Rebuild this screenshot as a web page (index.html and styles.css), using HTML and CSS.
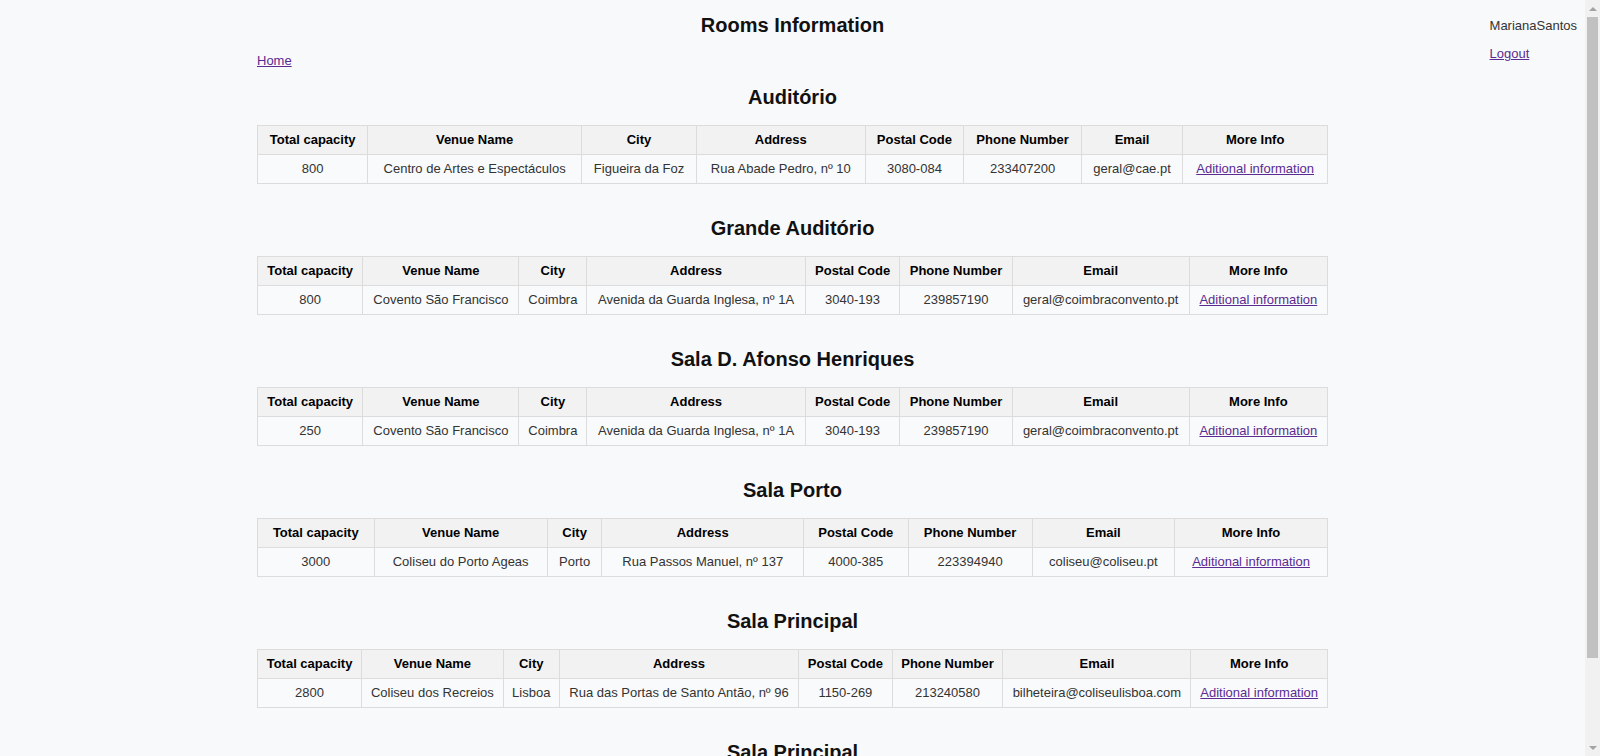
FILE: index.html
```html
<!DOCTYPE html>
<html lang="en">
<head>
<meta charset="utf-8">
<title>Rooms Information</title>
<link rel="stylesheet" href="styles.css">
</head>
<body>
<div class="page">
  <main class="main">
    <h1 class="title">Rooms Information</h1>
    <nav class="nav"><a class="link" href="#">Home</a></nav>

    <section class="room">
      <h2 class="room-name">Auditório</h2>
      <table class="info">
        <thead><tr><th>Total capacity</th><th>Venue Name</th><th>City</th><th>Address</th><th>Postal Code</th><th>Phone Number</th><th>Email</th><th>More Info</th></tr></thead>
        <tbody><tr><td>800</td><td>Centro de Artes e Espectáculos</td><td>Figueira da Foz</td><td>Rua Abade Pedro, nº 10</td><td>3080-084</td><td>233407200</td><td>geral@cae.pt</td><td><a class="link" href="#">Aditional information</a></td></tr></tbody>
      </table>
    </section>

    <section class="room">
      <h2 class="room-name">Grande Auditório</h2>
      <table class="info">
        <thead><tr><th>Total capacity</th><th>Venue Name</th><th>City</th><th>Address</th><th>Postal Code</th><th>Phone Number</th><th>Email</th><th>More Info</th></tr></thead>
        <tbody><tr><td>800</td><td>Covento São Francisco</td><td>Coimbra</td><td>Avenida da Guarda Inglesa, nº 1A</td><td>3040-193</td><td>239857190</td><td>geral@coimbraconvento.pt</td><td><a class="link" href="#">Aditional information</a></td></tr></tbody>
      </table>
    </section>

    <section class="room">
      <h2 class="room-name">Sala D. Afonso Henriques</h2>
      <table class="info">
        <thead><tr><th>Total capacity</th><th>Venue Name</th><th>City</th><th>Address</th><th>Postal Code</th><th>Phone Number</th><th>Email</th><th>More Info</th></tr></thead>
        <tbody><tr><td>250</td><td>Covento São Francisco</td><td>Coimbra</td><td>Avenida da Guarda Inglesa, nº 1A</td><td>3040-193</td><td>239857190</td><td>geral@coimbraconvento.pt</td><td><a class="link" href="#">Aditional information</a></td></tr></tbody>
      </table>
    </section>

    <section class="room">
      <h2 class="room-name">Sala Porto</h2>
      <table class="info">
        <thead><tr><th>Total capacity</th><th>Venue Name</th><th>City</th><th>Address</th><th>Postal Code</th><th>Phone Number</th><th>Email</th><th>More Info</th></tr></thead>
        <tbody><tr><td>3000</td><td>Coliseu do Porto Ageas</td><td>Porto</td><td>Rua Passos Manuel, nº 137</td><td>4000-385</td><td>223394940</td><td>coliseu@coliseu.pt</td><td><a class="link" href="#">Aditional information</a></td></tr></tbody>
      </table>
    </section>

    <section class="room">
      <h2 class="room-name">Sala Principal</h2>
      <table class="info">
        <thead><tr><th>Total capacity</th><th>Venue Name</th><th>City</th><th>Address</th><th>Postal Code</th><th>Phone Number</th><th>Email</th><th>More Info</th></tr></thead>
        <tbody><tr><td>2800</td><td>Coliseu dos Recreios</td><td>Lisboa</td><td>Rua das Portas de Santo Antão, nº 96</td><td>1150-269</td><td>213240580</td><td>bilheteira@coliseulisboa.com</td><td><a class="link" href="#">Aditional information</a></td></tr></tbody>
      </table>
    </section>

    <section class="room">
      <h2 class="room-name">Sala Principal</h2>
      <table class="info">
        <thead><tr><th>Total capacity</th><th>Venue Name</th><th>City</th><th>Address</th><th>Postal Code</th><th>Phone Number</th><th>Email</th><th>More Info</th></tr></thead>
        <tbody><tr><td>1238</td><td>Casa da Música</td><td>Porto</td><td>Avenida da Boavista, nº 604-610</td><td>4149-071</td><td>220120220</td><td>info@casadamusica.com</td><td><a class="link" href="#">Aditional information</a></td></tr></tbody>
      </table>
    </section>
  </main>

  <aside class="user">
    <div class="user-name">MarianaSantos</div>
    <a class="link" href="#">Logout</a>
  </aside>
</div>

<div class="scrollbar" aria-hidden="true">
  <div class="scroll-btn scroll-up"></div>
  <div class="scroll-track"><div class="scroll-thumb"></div></div>
  <div class="scroll-btn scroll-down"></div>
</div>
</body>
</html>
```

FILE: styles.css
```css
html, body {
  margin: 0;
  padding: 0;
  background: #f8f9fa;
}

body {
  font-family: "Liberation Sans", Arial, sans-serif;
  font-size: 13px;
  line-height: 15px;
  color: #333;
  padding-right: 15px;
}

.page {
  display: grid;
  grid-template-columns: 1fr 1071px 1fr;
  align-items: start;
}

.main {
  grid-column: 2;
  grid-row: 1;
  padding-top: 14px;
}

.title {
  margin: 0;
  font-size: 20px;
  line-height: 23px;
  font-weight: bold;
  color: #111;
  text-align: center;
}

.nav {
  margin-top: 16px;
}

.link {
  color: #5b2b91;
  text-decoration: underline;
}

.room {
  display: flex;
  flex-direction: column;
}

.nav + .room {
  margin-top: 18px;
}

.room-name {
  margin: 0 0 16px;
  font-size: 20px;
  line-height: 23px;
  font-weight: bold;
  color: #111;
  text-align: center;
}

.info {
  width: 100%;
  border-collapse: collapse;
  margin-bottom: 33px;
}

.info th,
.info td {
  border: 1px solid #dcdcdc;
  padding: 6px 8px;
  line-height: 16px;
  text-align: center;
  white-space: nowrap;
}

.info th {
  background: #f2f2f2;
  color: #000;
  font-weight: bold;
}

.info td {
  background: #f9fafb;
  color: #333;
}

.user {
  grid-column: 3;
  grid-row: 1;
  justify-self: end;
  margin: 18px 8px 0 0;
  display: flex;
  flex-direction: column;
  gap: 13px;
  color: #333;
}

/* browser scrollbar, drawn over the right edge of the viewport */
.scrollbar {
  position: fixed;
  top: 0;
  right: 0;
  width: 15px;
  height: 100vh;
  background: #f1f1f1;
  display: flex;
  flex-direction: column;
}

.scroll-btn {
  height: 17px;
  flex: none;
  display: flex;
  align-items: center;
  justify-content: center;
}

.scroll-btn::before {
  content: "";
  width: 0;
  height: 0;
  border-left: 4px solid transparent;
  border-right: 4px solid transparent;
}

.scroll-up::before {
  border-bottom: 4px solid #a3a3a3;
}

.scroll-down::before {
  border-top: 4px solid #a3a3a3;
}

.scroll-track {
  flex: 1;
  padding: 0 2px;
}

.scroll-thumb {
  height: 641px;
  background: #c1c1c1;
}
```
